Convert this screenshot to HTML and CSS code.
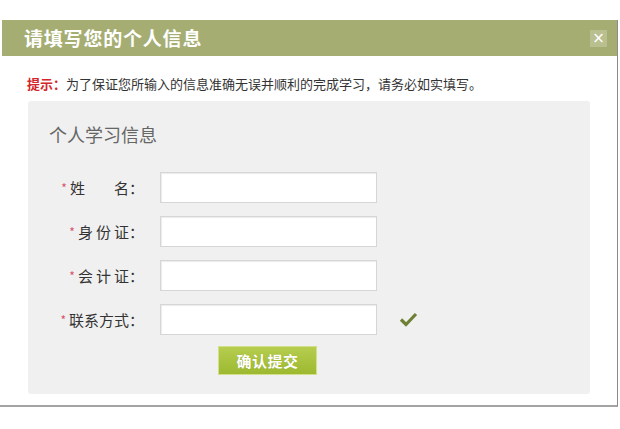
FILE: index.html
```html
<!DOCTYPE html>
<html lang="zh-CN">
<head>
<meta charset="utf-8">
<title>请填写您的个人信息</title>
<link rel="stylesheet" href="styles.css">
</head>
<body>
<div class="dialog">
  <div class="header">
    <span class="title">请填写您的个人信息</span>
    <span class="close">×</span>
  </div>
  <div class="body">
    <p class="tip"><span class="tip-label">提示：</span>为了保证您所输入的信息准确无误并顺利的完成学习，请务必如实填写。</p>
    <div class="panel">
      <h2 class="panel-title">个人学习信息</h2>
      <div class="rows">
        <div class="row">
          <label class="label"><span class="star">*</span><span class="gap-name">姓</span>名：</label>
          <span class="input"></span>
        </div>
        <div class="row">
          <label class="label"><span class="star">*</span><span class="spread">身份</span>证：</label>
          <span class="input"></span>
        </div>
        <div class="row">
          <label class="label"><span class="star">*</span><span class="spread">会计</span>证：</label>
          <span class="input"></span>
        </div>
        <div class="row">
          <label class="label"><span class="star">*</span>联系方式：</label>
          <span class="input"></span>
          <svg class="check" width="19" height="15" viewBox="0 0 19 15"><path d="M2 7.5 L7 12.5 L17 2" fill="none" stroke="#6e8034" stroke-width="3.2" stroke-linejoin="miter"/></svg>
        </div>
      </div>
      <div class="actions">
        <button class="submit">确认提交</button>
      </div>
    </div>
  </div>
</div>
</body>
</html>
```

FILE: styles.css
```css
html, body {
  margin: 0;
  padding: 0;
  background: #ffffff;
}
body {
  font-family: "Noto Sans CJK SC", "Noto Sans", sans-serif;
  color: #333;
}
.dialog {
  margin-top: 20px;
  width: 615px;
  padding-left: 2px;
  border-right: 1px solid #8c8c8c;
  border-bottom: 2px solid #a3a3a3;
  background: #fff;
}
.header {
  height: 36px;
  background: #a5ad73;
  display: flex;
  align-items: center;
  justify-content: space-between;
  padding: 0 10px 0 22px;
}
.title {
  color: #fff;
  font-size: 19px;
  font-weight: bold;
  letter-spacing: 0.8px;
  line-height: 36px;
}
.close {
  width: 17px;
  height: 17px;
  background: #b9bf8f;
  color: #fff;
  font-family: "DejaVu Sans", sans-serif;
  font-size: 15px;
  line-height: 17px;
  text-align: center;
}
.body {
  padding: 20px 0 11px 0;
}
.tip {
  margin: 0 0 9px 25px;
  font-size: 13px;
  line-height: 16px;
  letter-spacing: 0;
  color: #333;
}
.tip-label {
  color: #d4252b;
  font-weight: bold;
}
.panel {
  margin-left: 26px;
  width: 562px;
  height: 293px;
  box-sizing: border-box;
  background: #f0f0f0;
  border-radius: 3px;
  padding: 23px 0 0 0;
}
.panel-title {
  margin: 0 0 28px 21px;
  font-size: 18px;
  line-height: 20px;
  font-weight: normal;
  color: #666;
}
.rows {
  display: flex;
  flex-direction: column;
  gap: 13px;
}
.row {
  display: flex;
  align-items: center;
  height: 31px;
}
.label {
  width: 116px;
  text-align: right;
  font-size: 15px;
  color: #333;
  line-height: 31px;
  white-space: nowrap;
}
.star {
  color: #d9536a;
  font-size: 12px;
  margin-right: 3px;
  position: relative;
  top: -1px;
}
.gap-name {
  margin-right: 29px;
}
.spread {
  letter-spacing: 3px;
}
.input {
  display: block;
  margin-left: 16px;
  width: 217px;
  height: 31px;
  box-sizing: border-box;
  background: #fff;
  border: 1px solid #d6d6d6;
  box-shadow: inset 1px 1px 1px #ececec;
}
.check {
  margin-left: 22px;
}
.actions {
  padding: 11px 0 0 190px;
}
.submit {
  display: block;
  width: 99px;
  height: 29px;
  padding: 0;
  border: 1px solid #d3e08a;
  background: linear-gradient(#b6cd4f, #9db930);
  color: #fff;
  font-family: "Noto Sans CJK SC", sans-serif;
  font-size: 15px;
  font-weight: bold;
  letter-spacing: 0.5px;
  text-shadow: 0 0 1px #8aa126;
}
```
